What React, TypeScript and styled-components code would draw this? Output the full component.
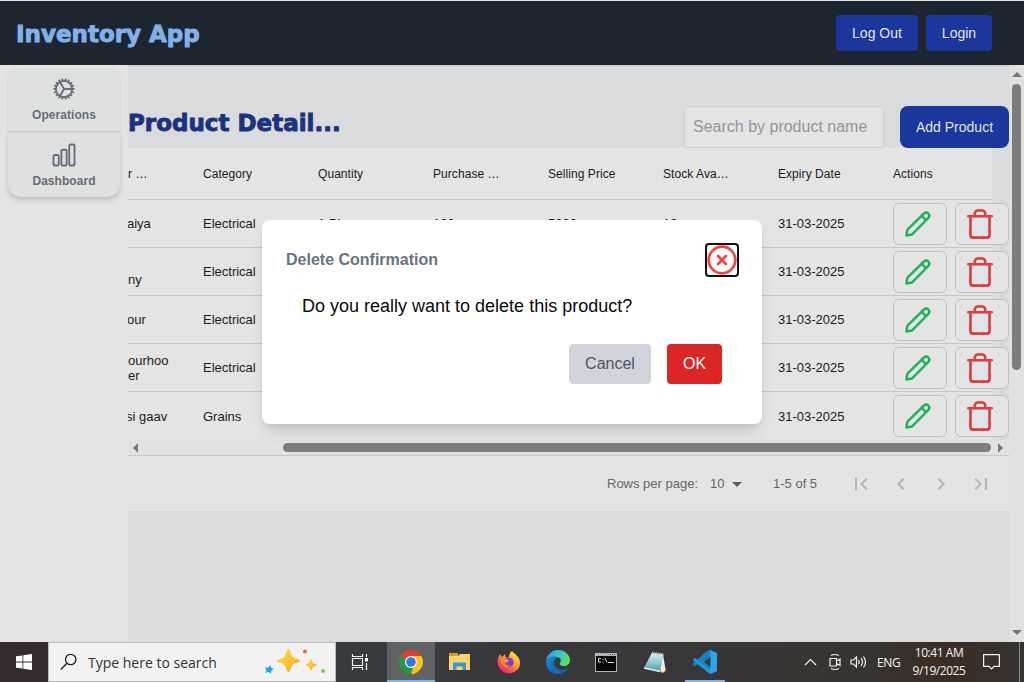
import React from "react";
import styled, { createGlobalStyle } from "styled-components";
import { HiOutlineCog, HiOutlineChartBar } from "react-icons/hi2";

const Global = createGlobalStyle`
  *, *::before, *::after { box-sizing: border-box; }
  html, body { margin: 0; padding: 0; overflow: hidden; }
  body { font-family: "Liberation Sans", Arial, sans-serif; background: #dadbdd; }
  button { font-family: inherit; margin: 0; }
`;

const Screen = styled.div`
  width: 1024px;
  height: 682px;
  display: flex;
  flex-direction: column;
  position: relative;
  overflow: hidden;
`;

const TopBar = styled.header`
  height: 65px;
  flex: none;
  border-top: 1px solid #dfe3e2;
  background: #1d2531;
  display: flex;
  align-items: center;
  justify-content: space-between;
  padding: 0 32px 0 16px;
`;

const Brand = styled.div`
  font-family: "DejaVu Sans", "Liberation Sans", sans-serif;
  font-weight: bold;
  font-size: 23px;
  -webkit-text-stroke: 0.9px currentColor;
  line-height: 32px;
  padding-top: 2px;
  color: #82b1e9;
  white-space: nowrap;
`;

const NavButtons = styled.div`
  display: flex;
  gap: 8px;
`;

const NavButton = styled.button<{ $w: number }>`
  width: ${(p) => p.$w}px;
  height: 36px;
  padding: 0;
  border: 0;
  border-radius: 4px;
  background: #1b369c;
  color: #e4e4e4;
  font-size: 14px;
`;

const Body = styled.div`
  height: 577px;
  flex: none;
  display: flex;
`;

const Sidebar = styled.aside`
  width: 128px;
  background: #e4e4e4;
  padding: 2px 8px;
`;

const SideItem = styled.div<{ $last?: boolean }>`
  height: 64px;
  margin-bottom: 2px;
  padding-top: 8px;
  display: flex;
  flex-direction: column;
  align-items: center;
  background: #dfe1e0;
  color: #676c79;
  font-size: 12px;
  font-weight: bold;
  line-height: 20px;
  letter-spacing: 0.05px;
  border-radius: ${(p) => (p.$last ? "0 0 13px 13px" : "13px 13px 0 0")};
  box-shadow: 0 ${(p) => (p.$last ? "3px 5px" : "1px 2px")} rgba(0, 0, 0, 0.16);
`;

const SideIcon = styled.span`
  height: 28px;
  margin-bottom: 2px;
  display: flex;
  align-items: center;
`;

const Main = styled.main`
  width: 881px;
  flex: none;
  background: #dadbdd;
  box-shadow: inset 0 1px 0 #cbcdcf;
`;

const Heading = styled.div`
  height: 83px;
  padding-top: 41px;
  display: flex;
`;

const Title = styled.h1`
  margin: 0;
  flex: 1;
  font-family: "DejaVu Sans", "Liberation Sans", sans-serif;
  font-weight: bold;
  font-size: 23px;
  -webkit-text-stroke: 0.9px currentColor;
  line-height: 34px;
  color: #1b337d;
  white-space: nowrap;
`;

const SearchField = styled.div`
  width: 200px;
  height: 42px;
  margin-right: 16px;
  padding: 0 8px;
  line-height: 39px;
  font-size: 16px;
  color: #9296a1;
  background: #e4e4e4;
  border: 1px solid #cecfd1;
  border-radius: 4px;
`;

const AddButton = styled.button`
  width: 109px;
  height: 42px;
  padding: 0;
  border: 0;
  border-radius: 8px;
  background: #1b369c;
  color: #e4e4e4;
  font-size: 14px;
`;

const Row = styled.div<{ $h: number; $line?: boolean }>`
  width: 864px;
  height: ${(p) => p.$h}px;
  display: flex;
  align-items: center;
  background: #e4e4e4;
  border-bottom: ${(p) => (p.$line ? "1px solid #c6c7c8" : "0")};
  font-size: 13px;
  line-height: 15px;
  color: #1b1b1b;
  white-space: nowrap;
`;

const HeadRow = styled(Row)`
  font-size: 12px;
  letter-spacing: 0.06px;
  padding-top: 1px;
`;

const Cut = styled.div<{ $shift?: number }>`
  width: 59px;
  flex: none;
  overflow: hidden;
  white-space: pre;
  text-indent: ${(p) => p.$shift ?? 0}px;
`;

const Cell = styled.div`
  width: 115px;
  flex: none;
  padding-left: 16px;
`;

const Actions = styled.div`
  flex: none;
  width: 132px;
  padding-left: 16px;
  display: flex;
  gap: 8px;
`;

const ActionButton = styled.button<{ $c: string }>`
  width: 54px;
  height: 42px;
  flex: none;
  padding: 0 4px 0 0;
  display: flex;
  align-items: center;
  justify-content: center;
  background: #e4e4e4;
  border: 1px solid #bdbfc7;
  border-radius: 6px;
  color: ${(p) => p.$c};
`;

const HScroll = styled.div`
  height: 16px;
  display: flex;
  align-items: center;
  background: #e2e2e2;
  border-bottom: 1px solid #c8c8c9;
  padding: 0 6px 0 5px;
`;

const HThumb = styled.div`
  width: 708px;
  height: 9px;
  margin: 0 7px 0 145px;
  border-radius: 5px;
  background: #7d7d7d;
`;

const Pagination = styled.div`
  height: 55px;
  background: #e4e4e4;
  display: flex;
  align-items: center;
  color: #666;
  font-size: 13px;
  padding-left: 479px;
  white-space: nowrap;
`;

const PageText = styled.span<{ $w: number }>`
  width: ${(p) => p.$w}px;
  flex: none;
`;

const PageIcons = styled.div`
  display: flex;
  gap: 16px;
`;

const VScroll = styled.div`
  width: 15px;
  background: #e1e1e2;
  display: flex;
  flex-direction: column;
  align-items: center;
  padding: 7px 0 7px;
`;

const VThumb = styled.div`
  width: 9px;
  height: 286px;
  margin: 7px 0 auto;
  border-radius: 5px;
  background: #7d7d7d;
`;

const Dialog = styled.div`
  position: absolute;
  left: 262px;
  top: 220px;
  width: 500px;
  height: 204px;
  padding: 23px 24px 0;
  border-radius: 8px;
  background: #fff;
  box-shadow: 0 10px 15px -3px rgba(0, 0, 0, 0.12), 0 4px 6px -2px rgba(0, 0, 0, 0.07);
`;

const DialogHead = styled.div`
  display: flex;
  justify-content: space-between;
  height: 34px;
  font-size: 16px;
  font-weight: bold;
  line-height: 33px;
  color: #6b7280;
`;

const CloseButton = styled.button`
  width: 34px;
  height: 34px;
  margin-right: -1px;
  padding: 0;
  border: 2px solid #101010;
  border-radius: 4px;
  background: #fff;
  display: flex;
`;

const DialogText = styled.p`
  margin: 15px 0 0 16px;
  font-size: 18px;
  line-height: 28px;
  color: #0a0a0a;
`;

const DialogButtons = styled.div`
  display: flex;
  justify-content: flex-end;
  gap: 16px;
  padding: 24px 16px 0 0;
`;

const DialogButton = styled.button<{ $w: number; $danger?: boolean }>`
  width: ${(p) => p.$w}px;
  height: 40px;
  padding: 0 0 1px;
  border: 0;
  border-radius: 4px;
  font-size: 16px;
  background: ${(p) => (p.$danger ? "#dc2626" : "#d1d5db")};
  color: ${(p) => (p.$danger ? "#fff" : "#4b5563")};
`;

const Taskbar = styled.footer`
  height: 40px;
  flex: none;
  display: flex;
  background: linear-gradient(90deg, #352a2e 0, #352a2e 48px, #373c3f 336px, #38383b 500px, #393637 720px, #38332f 870px, #3a2d24 950px, #37322e 1020px);
  color: #f4f4f4;
  font-family: "Open Sans", "Noto Sans", sans-serif;
`;

const TaskSlot = styled.div<{ $w: number; $active?: boolean; $line?: boolean }>`
  width: ${(p) => p.$w}px;
  height: 40px;
  flex: none;
  display: flex;
  align-items: center;
  justify-content: center;
  background: ${(p) => (p.$active ? "#606264" : "transparent")};
  box-shadow: ${(p) => (p.$line ? "inset 0 -2px 0 #76b9ed" : "none")};
`;

const TaskViewSlot = styled(TaskSlot)`
  padding-right: 4px;
`;

const SearchBox = styled.div`
  width: 288px;
  height: 40px;
  flex: none;
  display: flex;
  align-items: center;
  padding: 0 9px 0 11px;
  background: #f2f2f2;
  border: 1px solid #bcbcbc;
  color: #333;
  font-size: 14px;
`;

const SearchLabel = styled.span`
  flex: 1;
  margin-left: 10px;
  white-space: nowrap;
`;

const Tray = styled.div`
  margin-left: auto;
  display: flex;
  align-items: center;
  font-size: 12px;
  padding-right: 2px;
  border-right: 1px solid #8b8785;
  margin-right: 4px;
`;

const Lang = styled.span`
  width: 24px;
  margin: 0 11px 0 9px;
  letter-spacing: -0.3px;
`;

const Clock = styled.div`
  width: 54px;
  margin-right: 17px;
  display: flex;
  flex-direction: column;
  align-items: center;
  line-height: 18px;
  letter-spacing: -0.45px;
  white-space: nowrap;
`;

const PencilIcon = () => (
  <svg width="26" height="26" viewBox="0 0 26 26" fill="none" stroke="currentColor" strokeWidth="2.500" strokeLinecap="round" strokeLinejoin="round">
    <path d="M1.500 24.500L2 20.300Q2.200 19 3 18.100L19 2.500a3.050 3.050 0 0 1 4.400 4.400L7.900 22.700Q7 23.500 5.800 23.800ZM16.800 4.800L21.100 9.100" />
  </svg>
);

const TrashIcon = () => (
  <svg width="28" height="32" viewBox="0 0 28 32" fill="none" stroke="currentColor" strokeWidth="2.600" strokeLinecap="round" strokeLinejoin="round">
    <path d="M2.300 8.200H25.700M4.500 8.200V27.200a2.400 2.400 0 0 0 2.400 2.400H21.100a2.400 2.400 0 0 0 2.400-2.400V8.200M8.800 8.200V5.500a3 3 0 0 1 3-3H16.200a3 3 0 0 1 3 3V8.200" />
  </svg>
);

const Arrow = ({ d, w, h }: { d: string; w: number; h: number }) => (
  <svg width={w} height={h} viewBox={`0 0 ${w} ${h}`}>
    <path d={d} fill="#777" />
  </svg>
);

const pagePaths = [
  "M18.41 16.59L13.82 12l4.59-4.590L17 6l-6 6 6 6zM6 6h2v12H6z",
  "M15.410 7.410L14 6l-6 6 6 6 1.410-1.410L10.830 12z",
  "M10 6L8.590 7.410 13.170 12l-4.580 4.590L10 18l6-6z",
  "M5.590 7.410L10.180 12l-4.590 4.590L7 18l6-6-6-6zM16 6h2v12h-2z",
];

const Chrome = () => (
  <svg width="24" height="24" viewBox="0 0 24 24">
    <path d="M12 12L1.610 6A12 12 0 0 1 22.390 6Z" fill="#df4032" />
    <path d="M12 12L22.390 6A12 12 0 0 1 12 24L17 14.800Z" fill="#fbc516" />
    <path d="M12 12L12 24A12 12 0 0 1 1.610 6Z" fill="#269647" />
    <path d="M12 6H22.390L17.200 15 12 24 11 17Z" fill="#fbc516" />
    <path d="M1.610 6L6.800 15A6 6 0 0 0 14 17.600L12 24A12 12 0 0 1 1.610 6Z" fill="#269647" />
    <circle cx="12" cy="12" r="6" fill="#fff" />
    <circle cx="12" cy="12" r="4.800" fill="#3079ea" />
  </svg>
);

const Explorer = () => (
  <svg width="24" height="22" viewBox="0 0 24 22">
    <path d="M1 2H10V6H1Z" fill="#d89b16" />
    <path d="M1 5H10L12 3H22V19H1Z" fill="#f9d468" />
    <path d="M5 12.500a1 1 0 0 1 1-1H17a1 1 0 0 1 1 1V19H14.500V15.500H8.500V19H5Z" fill="#3795dc" />
  </svg>
);

const Firefox = () => (
  <svg width="24" height="24" viewBox="0 0 24 24">
    <defs>
      <linearGradient id="ff" x1=".9" y1=".1" x2=".2" y2="1">
        <stop offset="0" stopColor="#fff044" />
        <stop offset=".45" stopColor="#ff9031" />
        <stop offset=".8" stopColor="#f73a5b" />
        <stop offset="1" stopColor="#e31587" />
      </linearGradient>
    </defs>
    <path d="M15 1c1 2 4 3 5 5 4 4 4 10 0 14-5 5-13 4-17-1C0 15 0 10 2 6l1-2 2 3 3-3 .5 3 3 1C12 5 13 2 15 1Z" fill="url(#ff)" />
    <path d="M8 9c2-2 6-2 8 1 2 4-1 7-4 7-4 0-6-3-5-6l4 0Z" fill="#7442c8" />
    <path d="M4 8l5 1 3 1-1 2-3 1c0 2 3 3 5 2-2 4-8 2-9-2Z" fill="#ff8a28" />
  </svg>
);

const Edge = () => (
  <svg width="24" height="24" viewBox="0 0 24 24">
    <defs>
      <linearGradient id="eg" x1="0" y1=".2" x2="1" y2=".5">
        <stop offset="0" stopColor="#249ddc" />
        <stop offset=".5" stopColor="#32c3d5" />
        <stop offset="1" stopColor="#64df58" />
      </linearGradient>
      <linearGradient id="eb" x1="0" y1="0" x2="1" y2="1">
        <stop offset="0" stopColor="#1688d5" />
        <stop offset="1" stopColor="#1457a8" />
      </linearGradient>
    </defs>
    <path d="M0 11C1 4 6 0 12 0c7 0 12 5 12 10 0 4-3 6-6 6-3 0-5-1-4-3 2-3 0-6-4-6-4-1-8 1-10 4Z" fill="url(#eg)" />
    <path d="M0 11C3 7 8 6 12 8c-3 0-5 3-4 6 1 5 8 8 14 4-2 4-6 6-10 6C5 24 0 19 0 11Z" fill="url(#eb)" />
    <path d="M9 11c-4 4-1 11 6 12-8 2-13-8-6-12Z" fill="#1171c0" />
  </svg>
);

const Terminal = () => (
  <svg width="22" height="19" viewBox="0 0 22 19">
    <path d="M0 0H22V19H0Z" fill="#b2b5b7" />
    <path d="M1 3H21V18H1Z" fill="#070707" />
    <path d="M15 1.500h1m1 0h1m1 0h1" stroke="#555" />
    <path d="M6 5.500H3.500V9H6M8 6V7M8 8.500V9.500M10 5l2 4.500M13 9.500H19" stroke="#ddd" fill="none" />
  </svg>
);

const Notepad = () => (
  <svg width="24" height="23" viewBox="0 0 24 23">
    <defs>
      <linearGradient id="np" x1="0" y1="0" x2="0" y2="1">
        <stop offset="0" stopColor="#d9eff2" />
        <stop offset=".55" stopColor="#8ac6d1" />
        <stop offset="1" stopColor="#439eb0" />
      </linearGradient>
    </defs>
    <path d="M19 3L23 20 20 22 16 20Z" fill="#ba8c4d" />
    <path d="M20 3L22.500 19 19 22 17 18Z" fill="#f1eee6" />
    <path d="M9 1.500L20.500 3 17 21 1 17Z" fill="url(#np)" />
    <path d="M9 1.500L20.500 3" stroke="#9a9c99" strokeWidth="2" strokeDasharray="1 1" />
    <path d="M1 17L17 20.500" stroke="#e8f1ef" strokeWidth="1.500" />
  </svg>
);

const VsCode = () => (
  <svg width="24" height="24" viewBox="0 0 24 24">
    <path d="M17 0L24 3V21L17 24 5 13.500 2 16 0 15V13.500L14 1Z" fill="#1880c5" />
    <path d="M0 9.500L2 8 17 20V24L0 10.500Z" fill="#2295df" />
    <path d="M17 0L24 3V21L17 24Z" fill="#2ea4eb" />
    <path d="M17.500 7V17L11 12Z" fill="#393638" />
  </svg>
);

const Sparkles = () => (
  <svg width="61" height="28" viewBox="0 0 61 28">
    <defs>
      <linearGradient id="sp" x1="0" y1="0" x2="1" y2="1">
        <stop offset="0" stopColor="#ffe04c" />
        <stop offset="1" stopColor="#f6a916" />
      </linearGradient>
    </defs>
    <path d="M23.500 1c2 0 2.500 6 4.500 8S35 11 35 12.800 30 14.500 28 16.500s-2.500 7.500-4.500 7.500-2.500-5.500-4.500-7.500-7-2-7-3.700S17 11 19 9 21.500 1 23.500 1Z" fill="url(#sp)" />
    <path d="M46 11c1 0 1 3 2 4s4 1 4 2-3 1-4 2-1 3.500-2 3.500-1-2.500-2-3.500-3.500-1-3.500-2 2.500-1 3.500-2 1-4 2-4Z" fill="url(#sp)" />
    <path d="M5 17l1.500 3 2.500.5-2.500 2-.5 3-2.500-1.500-3 1 1-3L0 19.500l3.500 0Z" fill="#1ba7ee" />
    <circle cx="40" cy="3.500" r="2" fill="#ef6a2e" />
    <circle cx="58" cy="23" r="2" fill="#8acb45" />
  </svg>
);

const rows = [
  { name: "aiya", shift: -1, cat: "Electrical", qty: "1 Pkg", buy: "100", sell: "5000", stock: "10" },
  { name: "\nny", shift: 0, cat: "Electrical", qty: "", buy: "", sell: "", stock: "" },
  { name: "our", shift: -1, cat: "Electrical", qty: "", buy: "", sell: "", stock: "" },
  { name: "ourhoo\ner", shift: 0, cat: "Electrical", qty: "", buy: "", sell: "", stock: "" },
  { name: "si gaav", shift: -2, cat: "Grains", qty: "", buy: "", sell: "", stock: "" },
];

export default function App() {
  return (
    <Screen>
      <Global />
      <TopBar>
        <Brand>Inventory App</Brand>
        <NavButtons>
          <NavButton $w={82}>Log Out</NavButton>
          <NavButton $w={66}>Login</NavButton>
        </NavButtons>
      </TopBar>
      <Body>
        <Sidebar>
          <SideItem>
            <SideIcon>
              <HiOutlineCog size={26} strokeWidth={1.7} />
            </SideIcon>
            Operations
          </SideItem>
          <SideItem $last>
            <SideIcon>
              <HiOutlineChartBar size={28} strokeWidth={1.6} />
            </SideIcon>
            Dashboard
          </SideItem>
        </Sidebar>
        <Main>
          <Heading>
            <Title>Product Detail...</Title>
            <SearchField>Search by product name</SearchField>
            <AddButton>Add Product</AddButton>
          </Heading>
          <HeadRow $h={52} $line>
            <Cut>r …</Cut>
            {["Category", "Quantity", "Purchase …", "Selling Price", "Stock Ava…", "Expiry Date", "Actions"].map((t) => (
              <Cell key={t}>{t}</Cell>
            ))}
          </HeadRow>
          {rows.map((r, i) => (
            <Row key={i} $h={48} $line={i < 4}>
              <Cut $shift={r.shift}>{r.name}</Cut>
              <Cell>{r.cat}</Cell>
              <Cell>{r.qty}</Cell>
              <Cell>{r.buy}</Cell>
              <Cell>{r.sell}</Cell>
              <Cell>{r.stock}</Cell>
              <Cell>31-03-2025</Cell>
              <Actions>
                <ActionButton $c="#23b25b">
                  <PencilIcon />
                </ActionButton>
                <ActionButton $c="#d93d3d">
                  <TrashIcon />
                </ActionButton>
              </Actions>
            </Row>
          ))}
          <HScroll>
            <Arrow d="M5 0V10L0 5Z" w={5} h={10} />
            <HThumb />
            <Arrow d="M0 0V10L5 5Z" w={5} h={10} />
          </HScroll>
          <Pagination>
            <PageText $w={103}>Rows per page:</PageText>
            <PageText $w={15}>10</PageText>
            <PageText $w={48}>
              <svg width="24" height="24" viewBox="0 0 24 24" display="block">
                <path d="M7 10l5 5 5-5z" fill="#5f5f5f" />
              </svg>
            </PageText>
            <PageText $w={76}>1-5 of 5</PageText>
            <PageIcons>
              {pagePaths.map((d) => (
                <svg key={d} width="24" height="24" viewBox="0 0 24 24">
                  <path d={d} fill="#b4b4b4" />
                </svg>
              ))}
            </PageIcons>
          </Pagination>
        </Main>
        <VScroll>
          <Arrow d="M0 5H10L5 0Z" w={10} h={5} />
          <VThumb />
          <Arrow d="M0 0H10L5 5Z" w={10} h={5} />
        </VScroll>
      </Body>
      <Taskbar>
        <TaskSlot $w={48}>
          <svg width="16" height="16" viewBox="0 0 16 16">
            <path d="M0 2.300L6.500 1.400V7.500H0ZM7.300 1.300L16 0V7.500H7.300ZM0 8.400H6.500V14.600L0 13.700ZM7.300 8.400H16V16L7.300 14.700Z" fill="#fff" />
          </svg>
        </TaskSlot>
        <SearchBox>
          <svg width="18" height="18" viewBox="0 0 18 18" fill="none" stroke="#222" strokeWidth="1.300">
            <circle cx="10.700" cy="6.500" r="5.200" />
            <path d="M7 10.200L.7 16.500" />
          </svg>
          <SearchLabel>Type here to search</SearchLabel>
          <Sparkles />
        </SearchBox>
        <TaskViewSlot $w={51}>
          <svg width="18" height="16" viewBox="0 0 18 16" fill="none" stroke="#f2f2f2" strokeWidth="1.200">
            <path d="M1.500 0V2.500H11.500V0M1.500 16V13.500H11.500V16M1.500 4.500H11.500V11.500H1.500ZM15.500 0V3M15.500 9V16" />
            <path d="M14 4H17V7.500H14Z" fill="#fff" stroke="none" />
          </svg>
        </TaskViewSlot>
        <TaskSlot $w={48} $active $line><Chrome /></TaskSlot>
        <TaskSlot $w={49}><Explorer /></TaskSlot>
        <TaskSlot $w={49}><Firefox /></TaskSlot>
        <TaskSlot $w={49}><Edge /></TaskSlot>
        <TaskSlot $w={48}><Terminal /></TaskSlot>
        <TaskSlot $w={49}><Notepad /></TaskSlot>
        <TaskSlot $w={2} />
        <TaskSlot $w={48}>
          <TaskSlot $w={40} $line><VsCode /></TaskSlot>
        </TaskSlot>
        <Tray>
          <svg width="64" height="20" viewBox="0 0 64 20" fill="none" stroke="#f2f2f2" strokeWidth="1.200">
            <path d="M1 13L6.500 7.500 12 13" />
            <path d="M26 6.500H32.500V14H26ZM32.500 9L36 7V13.500L32.500 11.500M27 3.500Q31 1.500 35 3.500M27 16.500Q31 18.500 35 16.500" />
            <path d="M47 8H49.500L52.500 5V15L49.500 12H47ZM54.500 8q1.500 2 0 4M57 6q3 4 0 8M59.500 4.500q4 5.500 0 11" />
          </svg>
          <Lang>ENG</Lang>
          <Clock>
            <span>10:41 AM</span>
            <span>9/19/2025</span>
          </Clock>
          <svg width="34" height="18" viewBox="0 0 34 18" fill="none" stroke="#f2f2f2" strokeWidth="1.200">
            <path d="M.6 1.600H16.400V13.400H11L8.500 16 6 13.400H.6Z" />
          </svg>
        </Tray>
      </Taskbar>
      <Dialog>
        <DialogHead>
          Delete Confirmation
          <CloseButton>
            <svg width="30" height="30" viewBox="0 0 30 30" fill="none" stroke="#ef4444" strokeWidth="2.700" strokeLinecap="round">
              <circle cx="15" cy="15" r="13.300" />
              <path d="M11 11L19 19M19 11L11 19" />
            </svg>
          </CloseButton>
        </DialogHead>
        <DialogText>Do you really want to delete this product?</DialogText>
        <DialogButtons>
          <DialogButton $w={82}>Cancel</DialogButton>
          <DialogButton $w={55} $danger>OK</DialogButton>
        </DialogButtons>
      </Dialog>
    </Screen>
  );
}
